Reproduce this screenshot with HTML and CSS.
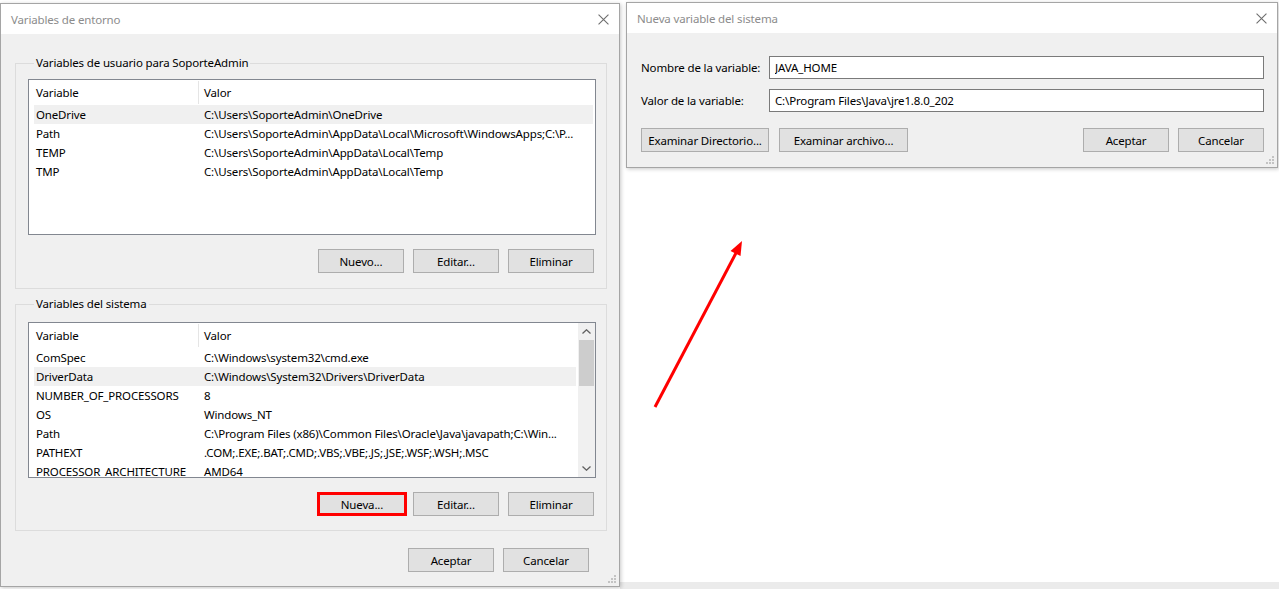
FILE: index.html
```html
<!DOCTYPE html>
<html lang="es">
<head>
  <meta charset="UTF-8"/>
  <title>Variables de entorno</title>
  <link rel="stylesheet" href="styles.css">
</head>
<body>
  <div class="desk">
    <div class="window env">
      <div class="titlebar">
        <span>Variables de entorno</span>
        <svg class="close" viewBox="0 0 10 10"><path d="M0.5 0.5L9.5 9.5M9.5 0.5L0.5 9.5"/></svg>
      </div>
      <div class="content">
        <fieldset class="group">
          <legend>Variables de usuario para SoporteAdmin</legend>
          <div class="list">
            <div class="rows">
              <div class="row head"><span>Variable</span><span>Valor</span></div>
              <div class="row sel"><span>OneDrive</span><span>C:\Users\SoporteAdmin\OneDrive</span></div>
              <div class="row"><span>Path</span><span>C:\Users\SoporteAdmin\AppData\Local\Microsoft\WindowsApps;C:\P...</span></div>
              <div class="row"><span>TEMP</span><span>C:\Users\SoporteAdmin\AppData\Local\Temp</span></div>
              <div class="row"><span>TMP</span><span>C:\Users\SoporteAdmin\AppData\Local\Temp</span></div>
            </div>
          </div>
          <div class="actions">
            <button class="btn">Nuevo...</button>
            <button class="btn">Editar...</button>
            <button class="btn">Eliminar</button>
          </div>
        </fieldset>

        <fieldset class="group second">
          <legend>Variables del sistema</legend>
          <div class="list">
            <div class="rows">
              <div class="row head"><span>Variable</span><span>Valor</span></div>
              <div class="row"><span>ComSpec</span><span>C:\Windows\system32\cmd.exe</span></div>
              <div class="row sel"><span>DriverData</span><span>C:\Windows\System32\Drivers\DriverData</span></div>
              <div class="row"><span>NUMBER_OF_PROCESSORS</span><span>8</span></div>
              <div class="row"><span>OS</span><span>Windows_NT</span></div>
              <div class="row"><span>Path</span><span>C:\Program Files (x86)\Common Files\Oracle\Java\javapath;C:\Win...</span></div>
              <div class="row"><span>PATHEXT</span><span>.COM;.EXE;.BAT;.CMD;.VBS;.VBE;.JS;.JSE;.WSF;.WSH;.MSC</span></div>
              <div class="row"><span>PROCESSOR_ARCHITECTURE</span><span>AMD64</span></div>
            </div>
            <div class="scrollbar">
              <div class="sb-btn"><svg viewBox="0 0 9 5"><path d="M0.5 4.5L4.5 0.8L8.5 4.5"/></svg></div>
              <div class="thumb"></div>
              <div class="track"></div>
              <div class="sb-btn"><svg viewBox="0 0 9 5"><path d="M0.5 0.5L4.5 4.2L8.5 0.5"/></svg></div>
            </div>
          </div>
          <div class="actions">
            <button class="btn marked">Nueva...</button>
            <button class="btn">Editar...</button>
            <button class="btn">Eliminar</button>
          </div>
        </fieldset>

        <div class="actions footer">
          <button class="btn">Aceptar</button>
          <button class="btn">Cancelar</button>
        </div>
      </div>
      <svg class="grip" viewBox="0 0 8 8"><path d="M6 0h2v2h-2zM3 3h2v2h-2zM6 3h2v2h-2zM0 6h2v2h-2zM3 6h2v2h-2zM6 6h2v2h-2z"/></svg>
    </div>

    <div class="side">
      <div class="window newvar">
        <div class="titlebar">
          <span>Nueva variable del sistema</span>
          <svg class="close" viewBox="0 0 10 10"><path d="M0.5 0.5L9.5 9.5M9.5 0.5L0.5 9.5"/></svg>
        </div>
        <div class="form">
          <div class="field">
            <label for="varName">Nombre de la variable:</label>
            <input type="text" id="varName" value="JAVA_HOME"/>
          </div>
          <div class="field">
            <label for="varValue">Valor de la variable:</label>
            <input type="text" id="varValue" value="C:\Program Files\Java\jre1.8.0_202"/>
          </div>
          <div class="form-actions">
            <button class="btn wide">Examinar Directorio...</button>
            <button class="btn wide browse">Examinar archivo...</button>
            <span class="spacer"></span>
            <button class="btn">Aceptar</button>
            <button class="btn">Cancelar</button>
          </div>
        </div>
        <svg class="grip" viewBox="0 0 8 8"><path d="M6 0h2v2h-2zM3 3h2v2h-2zM6 3h2v2h-2zM0 6h2v2h-2zM3 6h2v2h-2zM6 6h2v2h-2z"/></svg>
      </div>
      <div class="strip"></div>
    </div>

    <svg class="arrow" viewBox="0 0 1279 589">
      <line x1="655" y1="407" x2="736" y2="253"/>
      <polygon points="742,241 740.5,256 730.5,251"/>
    </svg>
  </div>
</body>
</html>
```

FILE: styles.css
```css
* { box-sizing: border-box; }
body { margin: 0; background: #fff; font-family: "Noto Sans", "Segoe UI", sans-serif; font-size: 11.5px; letter-spacing: -0.15px; color: #000; }

.desk { position: relative; display: flex; align-items: flex-start; height: 589px; overflow: hidden; }

.window { position: relative; background: #f0f0f0; border: 1px solid #a5a5a5; box-shadow: 1px 1px 4px rgba(0,0,0,0.22); }
.titlebar { height: 30px; flex: none; display: flex; align-items: center; justify-content: space-between; padding: 0 10px 0 10px; background: #fff; color: #8c8c8c; }
.close { width: 11px; height: 11px; }
.close path { stroke: #6e6e6e; stroke-width: 1; fill: none; }
.grip { position: absolute; right: 3px; bottom: 3px; width: 8px; height: 8px; }
.grip path { fill: #c3c3c3; }

/* Variables de entorno */
.env { width: 620px; height: 584px; margin-top: 3px; }
.content { padding: 0 12px 0 14px; }

.group { margin: 21px 0 0; padding: 8px 10px 15px 12px; border: 1px solid #dcdcdc; min-width: 0; }
.group legend { margin-left: 6px; padding: 0 2px; line-height: 16px; }
.group.second { margin-top: 7px; padding-top: 10px; padding-bottom: 14px; }

.list { display: flex; height: 156px; border: 1px solid #828790; background: #fff; overflow: hidden; }
.rows { flex: 1; min-width: 0; }
.row { display: grid; grid-template-columns: 165px 1fr; height: 19px; align-items: center; margin-left: 5px; margin-right: 2px; }
.row span { white-space: nowrap; overflow: hidden; text-overflow: ellipsis; }
.row span:first-child { padding-left: 2px; }
.row span:last-child { padding-left: 5px; }
.row.head { grid-template-columns: 170px 1fr; height: 25px; margin: 0; align-items: stretch; }
.row.head span { display: flex; align-items: center; }
.row.head span:first-child { padding-left: 7px; border-right: 1px solid #e5e5e5; margin: 1px 0 1px; }
.row.sel { background: #f0f0f0; }

.scrollbar { width: 17px; flex: none; display: flex; flex-direction: column; background: #f0f0f0; }
.sb-btn { height: 17px; display: flex; align-items: center; justify-content: center; }
.sb-btn svg { width: 9px; height: 5px; }
.sb-btn path { stroke: #606060; stroke-width: 1.3; fill: none; }
.thumb { height: 46px; background: #cdcdcd; margin: 0 1px; }
.track { flex: 1; }

.actions { display: flex; justify-content: flex-end; align-items: center; gap: 9px; margin-top: 14px; padding-right: 2px; }
.actions.footer { margin-top: 17px; padding-right: 18px; }

.btn { width: 86px; height: 24px; padding: 0; background: #e1e1e1; border: 1px solid #adadad; font: inherit; letter-spacing: inherit; color: #000; }
.btn.marked { width: 90px; height: 24px; border: 3px solid #f00; margin-right: -3px; }

/* Nueva variable del sistema */
.side { flex: 1; display: flex; flex-direction: column; height: 589px; }
.newvar { width: 652px; height: 166px; margin: 2px 0 0 6px; }
.form { padding: 23px 13px 0 14px; }
.field { display: flex; align-items: center; }
.field + .field { margin-top: 10px; }
.field label { width: 128px; flex: none; }
.field input { flex: 1; height: 23px; padding: 0 5px; border: 1px solid #7a7a7a; background: #fff; font: inherit; letter-spacing: inherit; color: #000; }
.form-actions { display: flex; gap: 9px; margin-top: 16px; }
.btn.wide { width: 128px; }
.btn.browse { width: 129px; margin-left: 1px; }
.spacer { flex: 1; }
.strip { margin-top: auto; height: 7px; background: #ebebeb; }

.arrow { position: absolute; left: 0; top: 0; width: 1279px; height: 589px; pointer-events: none; }
.arrow line { stroke: #f00; stroke-width: 3; }
.arrow polygon { fill: #f00; }
```
